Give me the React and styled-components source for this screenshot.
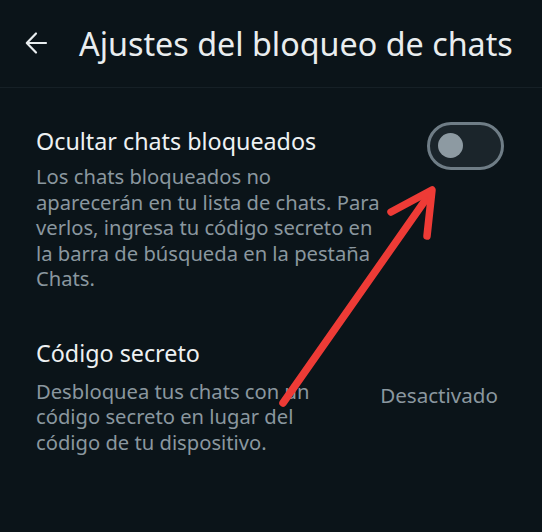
import React from 'react'
import styled, { createGlobalStyle } from 'styled-components'

const GlobalStyle = createGlobalStyle`
  html, body {
    margin: 0;
    padding: 0;
    background: #0b1419;
  }
  * {
    box-sizing: border-box;
  }
`

const Screen = styled.div`
  position: relative;
  width: 542px;
  height: 532px;
  overflow: hidden;
  background: #0b1419;
  font-family: 'Noto Sans', 'Open Sans', sans-serif;
  color: #e9edef;
`

const Header = styled.header`
  display: flex;
  align-items: center;
  height: 88px;
  padding: 0 0 2px 24px;
  border-bottom: 1px solid #162026;
`

const BackButton = styled.button`
  display: flex;
  align-items: center;
  justify-content: center;
  width: 24px;
  height: 24px;
  margin-right: 31px;
  padding: 0;
  border: none;
  background: none;
  color: #e9edef;
`

const Title = styled.h1`
  margin: 0;
  font-size: 32.3px;
  font-weight: 400;
  white-space: nowrap;
`

const Section = styled.div`
  display: flex;
  align-items: flex-start;
  justify-content: space-between;
  padding: ${(p) => p.pad};
`

const TextCol = styled.div`
  display: flex;
  flex-direction: column;
`

const ItemTitle = styled.div`
  font-size: 23.3px;
  line-height: 30px;
  color: #eef1f2;
`

const ItemDesc = styled.p`
  margin: ${(p) => p.gap}px 0 0;
  font-size: 20.2px;
  line-height: 25.5px;
  white-space: nowrap;
  color: #8a979f;
`

const Toggle = styled.div`
  position: relative;
  flex-shrink: 0;
  width: 77px;
  height: 48px;
  margin-top: -4px;
  border: 3px solid #6f7d86;
  border-radius: 24px;
  background: #1b252b;
`

const Knob = styled.span`
  position: absolute;
  left: 8px;
  top: 8px;
  width: 25px;
  height: 25px;
  border-radius: 50%;
  background: #8d9aa2;
`

const Value = styled.span`
  font-size: 20.6px;
  color: #8a979f;
  margin-top: 43px;
`

const Annotation = styled.svg`
  position: absolute;
  left: 0;
  top: 0;
  pointer-events: none;
`

export default function App() {
  return (
    <Screen>
      <GlobalStyle />
      <Header>
        <BackButton aria-label='Atrás'>
          <svg width='24' height='24' viewBox='0 0 24 24' fill='none'>
            <path
              d='M22 12H3M12 2.5L2.8 12l9.2 9.5'
              stroke='currentColor'
              strokeWidth='2.2'
              strokeLinecap='round'
              strokeLinejoin='round'
            />
          </svg>
        </BackButton>
        <Title>Ajustes del bloqueo de chats</Title>
      </Header>

      <Section pad='38px 38px 0 36px'>
        <TextCol>
          <ItemTitle>Ocultar chats bloqueados</ItemTitle>
          <ItemDesc gap={8}>
            Los chats bloqueados no
            <br />
            aparecerán en tu lista de chats. Para
            <br />
            verlos, ingresa tu código secreto en
            <br />
            la barra de búsqueda en la pestaña
            <br />
            Chats.
          </ItemDesc>
        </TextCol>
        <Toggle>
          <Knob />
        </Toggle>
      </Section>

      <Section pad='46px 44px 0 36px'>
        <TextCol>
          <ItemTitle>Código secreto</ItemTitle>
          <ItemDesc gap={11}>
            Desbloquea tus chats con un
            <br />
            código secreto en lugar del
            <br />
            código de tu dispositivo.
          </ItemDesc>
        </TextCol>
        <Value>Desactivado</Value>
      </Section>

      <Annotation width='542' height='532' viewBox='0 0 542 532'>
        <g
          stroke='#ee3b36'
          strokeWidth='7.5'
          strokeLinecap='round'
          strokeLinejoin='round'
          fill='none'
        >
          <path d='M283 403L431 192' />
          <path d='M391 212L432 190L427 236' />
        </g>
      </Annotation>
    </Screen>
  )
}
